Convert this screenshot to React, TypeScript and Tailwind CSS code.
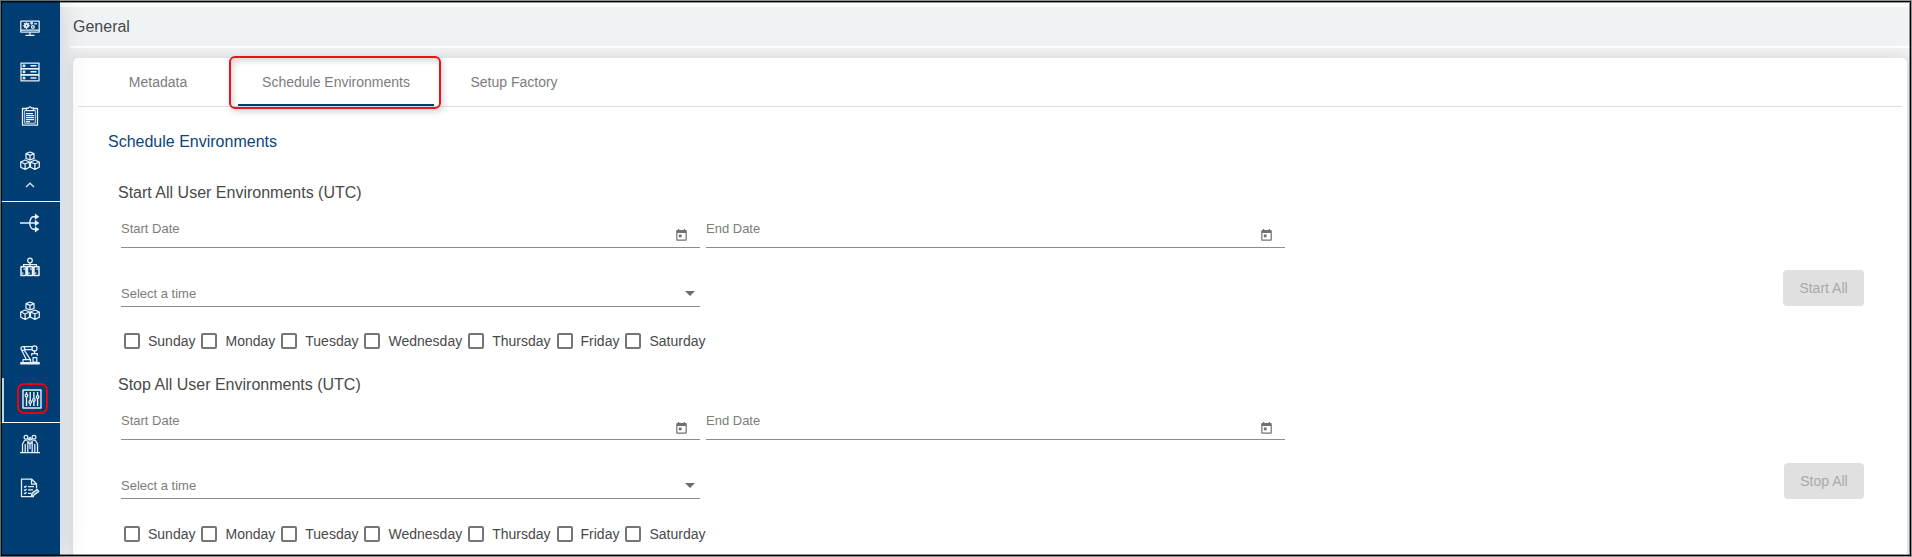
import React from "react";

type IconProps = { children: React.ReactNode };

const Icon = ({ children }: IconProps) => (
  <svg width="20" height="20" viewBox="0 0 20 20" fill="none" stroke="#e8f1f8" strokeWidth="1.25" strokeLinejoin="round" className="shrink-0">
    {children}
  </svg>
);

const MonitorIcon = () => (
  <Icon>
    <path d="M.8 3h18.400v11H.8zM1 12.200h18M10 14v3M5.500 17.400h9" />
    <circle cx="6.500" cy="7.500" r="1.600" strokeWidth="1.800" />
    <path d="M6.500 4.200v1M6.500 9.700v1.200M3.200 7.500h1M8.700 7.500h1.200M4.100 5.100l.9.900M8.900 5.100l-.9.900M4.100 9.900l.9-.9" />
    <circle cx="12.900" cy="9" r="1.400" />
    <circle cx="11.600" cy="5.200" r=".8" />
    <path d="M14 5.800h3" />
  </Icon>
);

const ServerIcon = () => (
  <Icon>
    <rect x="1" y="1" width="18" height="5.500" />
    <rect x="1" y="6.900" width="18" height="5.600" />
    <rect x="1" y="13" width="18" height="5.800" />
    <circle cx="4" cy="3.700" r=".9" />
    <circle cx="4" cy="9.700" r=".9" />
    <circle cx="4" cy="15.900" r=".9" />
    <path d="M10.500 3.700h6M10.500 9.700h6M10.500 15.900h6" strokeWidth="1.500" />
  </Icon>
);

const ClipboardIcon = () => (
  <Icon>
    <path d="M2.500 2.500h15v16.700h-15z" strokeWidth="1.300" />
    <path d="M4.700 4.500h10.600v12.700H4.700z" strokeWidth=".9" />
    <path d="M6.500 4.700V2H8.500c.4-1.500 2.600-1.500 3 0h2v2.700z" fill="#003d73" />
    <path d="M6 7.500h7M6 9.500h8M6 11.500h8M6 13.500h8M6 15.500h4" />
  </Icon>
);

const CubesIcon = () => (
  <Icon>
    <path d="M10 1l4 1.700v4.600L10 9 6 7.300V2.700zM6 2.700l4 1.700 4-1.700M10 4.400V9" />
    <path d="M5.100 9l4.400 2v5.200l-4.400 2.200-4.400-2.200V11zM.7 11l4.400 2 4.400-2M5.100 13v5.200" />
    <path d="M14.900 9l4.400 2v5.200l-4.400 2.200-4.400-2.200V11zM10.500 11l4.400 2 4.400-2M14.900 13v5.200" />
  </Icon>
);

const BranchIcon = () => (
  <Icon>
    <path d="M0 10h17M9.500 10c.8-3 1-6.300 4-6.300H17M9.500 10c.8 3 1 6.300 4 6.300H17" strokeWidth="1.400" />
    <path d="M15 .8l4.200 2.900L15 6.600zM15 7.100l4.200 2.900-4.200 2.900zM15 13.400l4.200 2.900-4.200 2.900z" fill="#e8f1f8" strokeWidth=".3" />
  </Icon>
);

const ClusterIcon = () => (
  <Icon>
    <circle cx="10" cy="3.500" r="2.300" />
    <path d="M10 5.700V9.500M3.500 9.500V7.500h13v2" />
    <path d="M1 9.800h5v8.700H1zM7.500 9.800h5v8.700h-5zM14 9.800h5v8.700h-5z" strokeWidth="1.500" />
    <path d="M3.500 12h1.800M1.800 16h1.600M10 12h1.800M8.300 16h1.600M16.500 12h1.800M14.800 16h1.600" />
  </Icon>
);

const RobotArmIcon = () => (
  <Icon>
    <circle cx="2.900" cy="3.600" r="1.900" />
    <circle cx="14.500" cy="3.400" r="2.500" />
    <path d="M3 1.700h9.500M4.800 4.500h7.400M4.300 5.200l6 9.300M1.700 5.200l4.600 9.300" />
    <path d="M14.500 6v2.500M11.700 10.800V8.500h5.600v2.300M13 12.500h3.800v4.500H13z" />
    <path d="M3 17.500v-3h7.500v3" />
    <path d="M.8 17.600h18.400v1.300H.8z" />
  </Icon>
);

const SlidersIcon = () => (
  <Icon>
    <rect x="1" y="1" width="18" height="18" strokeWidth="1.400" />
    <path d="M4.500 3v14M8.200 3v14M11.900 3v14M15.600 3v14" strokeWidth="1.400" />
    <circle cx="4.500" cy="6.500" r="1.300" fill="#003d73" />
    <circle cx="8.200" cy="13" r="1.300" fill="#003d73" />
    <circle cx="11.900" cy="11" r="1.300" fill="#003d73" />
    <circle cx="15.600" cy="8" r="1.300" fill="#003d73" />
  </Icon>
);

const PeopleIcon = () => (
  <Icon>
    <circle cx="6" cy="3.200" r="1.900" />
    <circle cx="14" cy="3.200" r="1.900" />
    <path d="M4 6.500L8 6l2-2.500L12 6l4 .5M10 3.500v4M2.500 18v-8L4.500 6.500M17.500 18v-8l-2-3.500" />
    <path d="M5.200 18v-8M7.800 18V7.500L10 10l2.200-2.500V18M14.800 18v-8M10 10v5M0 18.600h20" />
  </Icon>
);

const ReportIcon = () => (
  <Icon>
    <path d="M16.500 10.500V6l-5-5H1.500v17.600H14M11.500 1v5h5" />
    <path d="M4 8.500l1 .8 1.500-1.600M8 8.500h6M4 11.800l1 .8 1.500-1.600M8 11.800h5M4 15l1 .8 1.500-1.600M8 15.300h3" />
    <path d="M11.500 17.500l.6-2.500 5-3.500 1.700 1.900-4.700 3.700z" fill="#e8f1f8" fillOpacity=".45" />
  </Icon>
);

const NavItem = ({ children }: IconProps) => (
  <div className="flex h-[44px] w-full shrink-0 items-center justify-center">{children}</div>
);

const Sidebar = () => (
  <nav className="relative z-10 flex w-[60px] shrink-0 flex-col bg-[#003d73] pt-[6px] shadow-[2px_0_28px_rgba(0,0,0,0.14)]">
    <NavItem><MonitorIcon /></NavItem>
    <NavItem><ServerIcon /></NavItem>
    <NavItem><ClipboardIcon /></NavItem>
    <div className="flex h-[64px] shrink-0 flex-col items-center border-b border-white pt-[13px]">
      <CubesIcon />
      <svg width="10" height="6" viewBox="0 0 10 6" fill="none" stroke="#d5e2ec" strokeWidth="1.4" className="mt-[11px]">
        <path d="M1 5l4-3.700L9 5" />
      </svg>
    </div>
    <div className="flex h-[176px] shrink-0 flex-col pb-[2px]">
      <div className="-mt-px flex flex-col">
        <NavItem><BranchIcon /></NavItem>
        <NavItem><ClusterIcon /></NavItem>
        <NavItem><CubesIcon /></NavItem>
        <NavItem><RobotArmIcon /></NavItem>
      </div>
    </div>
    <div className="flex h-[45px] shrink-0 border-b border-white pl-[2px]">
      <div className="flex flex-1 items-center justify-center border-l-2 border-[#b5dbdd] pb-[3px]">
        <div className="flex h-[31px] w-[31px] items-center justify-center rounded-[7px] border-2 border-[#e8040c]">
          <SlidersIcon />
        </div>
      </div>
    </div>
    <div className="-mt-px flex flex-col">
      <NavItem><PeopleIcon /></NavItem>
      <NavItem><ReportIcon /></NavItem>
    </div>
  </nav>
);

const CalendarIcon = () => (
  <svg width="11" height="12" viewBox="0 0 11 12" fill="#707070" className="shrink-0">
    <path fillRule="evenodd" d="M2 0h1.200v1h4.600V0H9v1h.8q1 0 1 1v8.700q0 1-1 1H1.200q-1 0-1-1V2q0-1 1-1H2zM1.400 4v6.500h8.200V4z" />
    <path d="M2.800 5.500h2.800v2.800H2.800z" />
  </svg>
);

const DateField = ({ label, iconOffset }: { label: string; iconOffset: string }) => (
  <div className="flex h-[27px] w-[579px] items-start justify-between border-b border-[#8c8c8c]">
    <span className="text-[13px] leading-[15px] text-[#7c7c7c]">{label}</span>
    <div className={`mr-[13px] ${iconOffset}`}>
      <CalendarIcon />
    </div>
  </div>
);

const days = ["Sunday", "Monday", "Tuesday", "Wednesday", "Thursday", "Friday", "Saturday"];

type SectionProps = {
  title: string;
  action: string;
  iconOffset: string;
  daysOffset: string;
  buttonClass: string;
};

const Section = ({ title, action, iconOffset, daysOffset, buttonClass }: SectionProps) => (
  <section className="flex h-[192px] shrink-0 items-start justify-between pl-[45px] pr-[43px]">
    <div>
      <h3 className="text-base leading-[20px] text-[#494949]">{title}</h3>
      <div className="ml-[3px] mt-[18px] flex gap-[6px]">
        <DateField label="Start Date" iconOffset={iconOffset} />
        <DateField label="End Date" iconOffset={iconOffset} />
      </div>
      <div className="ml-[3px] mt-[38px] flex h-[21px] w-[579px] items-start justify-between border-b border-[#8c8c8c]">
        <span className="text-[13px] leading-[15px] text-[#7c7c7c]">Select a time</span>
        <svg width="10" height="5" viewBox="0 0 10 5" className="mr-[5px] mt-[5px]">
          <path d="M0 0h10L5 5z" fill="#6c6c6c" />
        </svg>
      </div>
      <div className={`ml-[6px] flex gap-[6px] ${daysOffset}`}>
        {days.map((day) => (
          <label key={day} className="flex items-center gap-[8px] text-sm leading-[16px] text-[#494949]">
            <span className="h-[16px] w-[16px] shrink-0 rounded-[2px] border-2 border-[#757575]" />
            {day}
          </label>
        ))}
      </div>
    </div>
    <button className={`h-[36px] rounded-[4px] bg-[#e0e0e0] text-sm text-[#a9a9a9] ${buttonClass}`}>{action}</button>
  </section>
);

export default function App() {
  return (
    <div className="relative flex h-[557px] w-[1912px] overflow-hidden bg-[#eff3f6] font-['Liberation_Sans',Arial,sans-serif]">
      <Sidebar />
      <div className="flex min-w-0 flex-1 flex-col">
        <div className="h-[7px] shrink-0 bg-[#fcfdfd]" />
        <header className="ml-[10px] flex h-[41px] shrink-0 items-start border-b-2 border-white pl-[3px] pt-[10px] text-base leading-[20px] text-[#494949]">
          General
        </header>
        <main className="ml-[13px] mr-[5px] mt-[10px] h-[520px] shrink-0 rounded-[5px] bg-white shadow-[0_0_14px_rgba(60,65,65,0.16)]">
          <div className="mx-[5px] flex h-[49px] border-b border-[#dedede] text-sm text-[#7c7c7c]">
            <div className="flex w-[160px] items-center justify-center">Metadata</div>
            <div className="relative flex w-[196px] items-center justify-center border-b-2 border-[#003d73] pt-[2px]">
              Schedule Environments
              <div className="absolute -left-[9px] -top-[2px] h-[53px] w-[212px] rounded-[6px] border-2 border-[#e8141b] shadow-[2px_3px_6px_rgba(0,0,0,0.16),inset_2px_3px_6px_rgba(0,0,0,0.16)]" />
            </div>
            <div className="flex w-[160px] items-center justify-center">Setup Factory</div>
          </div>
          <h2 className="pl-[35px] pt-[25px] text-base leading-[20px] text-[#0c4579]">Schedule Environments</h2>
          <div className="mt-[31px]">
            <Section
              title="Start All User Environments (UTC)"
              action="Start All"
              iconOffset="mt-[7.5px]"
              daysOffset="mt-[26px]"
              buttonClass="mt-[87px] w-[81px]"
            />
            <Section
              title="Stop All User Environments (UTC)"
              action="Stop All"
              iconOffset="mt-[8.5px]"
              daysOffset="mt-[27px]"
              buttonClass="mt-[88px] w-[80px]"
            />
          </div>
        </main>
      </div>
      <div className="pointer-events-none absolute inset-0 z-20 border border-[#77797b]/80">
        <div className="h-full w-full border border-black">
          <div className="h-full w-full border border-l-0 border-black/40" />
        </div>
      </div>
    </div>
  );
}
